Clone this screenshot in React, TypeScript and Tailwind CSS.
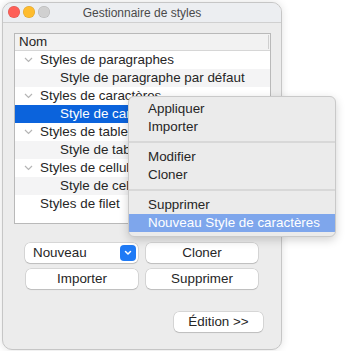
import React from "react";

type Row = { label: string; level: 0 | 1; selected?: boolean; expandable?: boolean };

const rows: Row[] = [
  { label: "Styles de paragraphes", level: 0, expandable: true },
  { label: "Style de paragraphe par défaut", level: 1 },
  { label: "Styles de caractères", level: 0, expandable: true },
  { label: "Style de caractère par défaut", level: 1, selected: true },
  { label: "Styles de tableaux", level: 0, expandable: true },
  { label: "Style de tableau par défaut", level: 1 },
  { label: "Styles de cellules", level: 0, expandable: true },
  { label: "Style de cellule par défaut", level: 1 },
  { label: "Styles de filet", level: 0 },
];

const Chevron = () => (
  <svg width="9" height="6" viewBox="0 0 9 6" className="shrink-0">
    <polyline points="1,1 4.5,4.5 8,1" fill="none" stroke="#b5b5b5" strokeWidth="1.2" />
  </svg>
);

const Button: React.FC<{ className?: string; children: React.ReactNode }> = ({ className, children }) => (
  <div
    className={
      "flex h-[20px] items-center justify-center rounded-[5px] bg-white text-[13.4px] text-[#262626] shadow-[0_0_0_0.5px_rgba(0,0,0,0.18),0_1px_1px_rgba(0,0,0,0.12)] " +
      (className ?? "")
    }
  >
    {children}
  </div>
);

const MenuItem: React.FC<{ label: string; active?: boolean }> = ({ label, active }) => (
  <div
    className={
      "flex h-[18px] items-center pl-[19px] text-[13.4px] " +
      (active ? "bg-[#7ea6ec] text-white" : "text-[#262626]")
    }
  >
    {label}
  </div>
);

const Separator = () => (
  <div className="flex h-[12px] items-center">
    <div className="h-[2px] w-full bg-[#d8d8d8]" />
  </div>
);

export default function App() {
  return (
    <div
      className="relative h-[351px] w-[345px] overflow-hidden bg-white"
      style={{ fontFamily: '"Liberation Sans", Arial, sans-serif' }}
    >
      {/* Window */}
      <div className="ml-[2px] mt-[2px] flex h-[348px] w-[280px] flex-col overflow-hidden rounded-[10px] border border-[#c6c6c6] bg-[#ececec] shadow-[0_0_8px_rgba(0,0,0,0.12)]">
        {/* Title bar */}
        <div className="relative flex h-[20px] shrink-0 items-center justify-center border-b border-[#d0d0d0] bg-[#eceef1]">
          <div className="absolute left-[5px] top-[3px] flex gap-[3px]">
            <span className="h-[12px] w-[12px] rounded-full bg-[#fe5f57] shadow-[inset_0_0_0_0.5px_rgba(0,0,0,0.15)]" />
            <span className="h-[12px] w-[12px] rounded-full bg-[#febc2e] shadow-[inset_0_0_0_0.5px_rgba(0,0,0,0.15)]" />
            <span className="h-[12px] w-[12px] rounded-full bg-[#d0d0d0] shadow-[inset_0_0_0_0.5px_rgba(0,0,0,0.15)]" />
          </div>
          <span className="text-[12px] text-[#4a4a4a]">Gestionnaire de styles</span>
        </div>

        {/* Table */}
        <div className="ml-[11px] mt-[10px] flex h-[191px] w-[257px] flex-col overflow-hidden border border-[#b9b9b9] bg-white">
          <div className="relative flex h-[17px] shrink-0 items-center border-b border-[#d6d6d6] bg-[#f2f2f2] pl-[4px] text-[13.4px] text-[#262626]">
            Nom
            <div className="absolute right-[1px] top-[1px] h-[14px] w-px bg-[#cfcfcf]" />
          </div>
          {rows.map((r, i) => (
            <div
              key={i}
              className={
                "flex h-[18px] shrink-0 items-center whitespace-nowrap text-[13.4px] " +
                (r.selected
                  ? "bg-[#0b63dc] text-white"
                  : r.level === 1
                  ? "bg-[#f4f4f5] text-[#262626]"
                  : "bg-white text-[#262626]")
              }
            >
              {r.level === 0 ? (
                <>
                  <div className="flex w-[25px] shrink-0 justify-end pr-[7px]">{r.expandable && <Chevron />}</div>
                  <span>{r.label}</span>
                </>
              ) : (
                <span className="pl-[45px]">{r.label}</span>
              )}
            </div>
          ))}
        </div>

        {/* Buttons */}
        <div className="ml-[22px] mt-[19px] flex gap-[8px]">
          <div className="flex h-[20px] w-[113px] items-center justify-between rounded-[5px] bg-white pl-[8px] pr-[2px] text-[13.4px] text-[#262626] shadow-[0_0_0_0.5px_rgba(0,0,0,0.18),0_1px_1px_rgba(0,0,0,0.12)]">
            <span>Nouveau</span>
            <div className="flex h-[16px] w-[16px] items-center justify-center rounded-[4px] bg-[#1f7af5]">
              <svg width="8" height="6" viewBox="0 0 8 6">
                <polyline points="1.5,1.5 4,4 6.5,1.5" fill="none" stroke="white" strokeWidth="1.5" strokeLinecap="round" strokeLinejoin="round" />
              </svg>
            </div>
          </div>
          <Button className="w-[112px]">Cloner</Button>
        </div>
        <div className="ml-[23px] mt-[6px] flex gap-[8px]">
          <Button className="w-[112px]">Importer</Button>
          <Button className="w-[112px]">Supprimer</Button>
        </div>
        <div className="ml-[171px] mt-[23px]">
          <Button className="w-[89px]">Édition &gt;&gt;</Button>
        </div>
      </div>

      {/* Context menu */}
      <div className="absolute left-[128px] top-[96px] w-[208px] overflow-hidden rounded-[6px] border border-[#c9c9c9] bg-[#ebebeb] pb-[4px] pt-[3px] shadow-[0_3px_10px_rgba(0,0,0,0.18)]">
        <MenuItem label="Appliquer" />
        <MenuItem label="Importer" />
        <Separator />
        <MenuItem label="Modifier" />
        <MenuItem label="Cloner" />
        <Separator />
        <MenuItem label="Supprimer" />
        <MenuItem label="Nouveau Style de caractères" active />
      </div>
    </div>
  );
}
